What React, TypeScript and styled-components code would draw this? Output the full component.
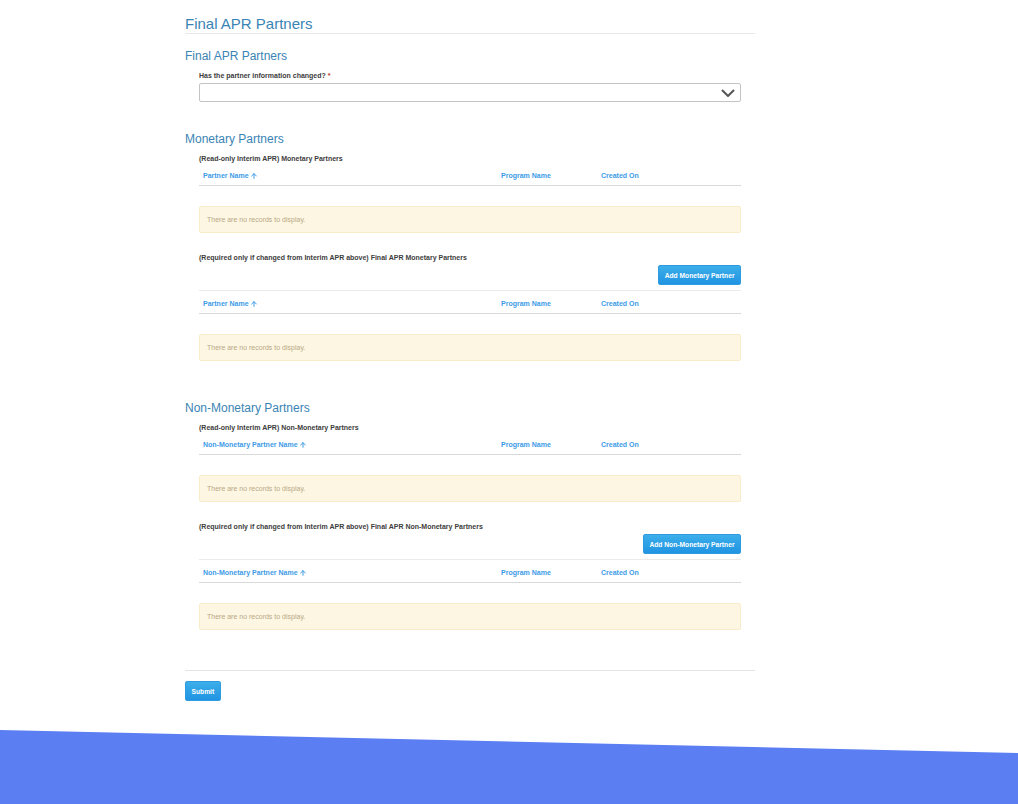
import React from "react";
import styled, { createGlobalStyle } from "styled-components";
import { ArrowUp } from "lucide-react";

const Global = createGlobalStyle`
  html, body { margin: 0; padding: 0; background: #fff; }
  body { font-family: "Liberation Sans", Arial, sans-serif; }
`;

const Page = styled.div`
  display: flex;
  flex-direction: column;
  min-height: 804px;
`;
const Main = styled.main`
  width: 570px;
  margin-left: 185px;
  height: 730px;
  padding-top: 15px;
  box-sizing: border-box;
`;
const PageTitle = styled.h1`
  margin: 0;
  height: 18px;
  line-height: 18px;
  font-size: 15px;
  font-weight: 400;
  color: #3a84b4;
  border-bottom: 1px solid #e8e8e8;
`;
const SectionTitle = styled.h2<{ $top: number }>`
  margin: ${(p) => p.$top}px 0 0;
  height: 16px;
  line-height: 16px;
  font-size: 12px;
  font-weight: 400;
  color: #3a84b4;
`;
const Indented = styled.div`
  margin: 0 14px;
`;
const FieldLabel = styled.div<{ $top: number }>`
  margin-top: ${(p) => p.$top}px;
  height: 9px;
  line-height: 9px;
  font-size: 7px;
  font-weight: 700;
  color: #3d3d3d;
  white-space: nowrap;
`;
const Req = styled.span`
  color: #c0392b;
  margin-left: 2px;
`;
const Select = styled.div`
  margin-top: 3px;
  height: 19px;
  box-sizing: border-box;
  border: 1px solid #c4c4c4;
  border-radius: 2px;
  background: #fff;
  display: flex;
  align-items: center;
  justify-content: flex-end;
  padding-right: 5px;
`;
const Chevron = styled.svg`
  display: block;
  width: 14px;
  height: 8px;
  fill: none;
  stroke: #555;
  stroke-width: 2;
`;
const ActionRow = styled.div`
  display: flex;
  justify-content: flex-end;
  margin-top: 3px;
`;
const Button = styled.button`
  display: block;
  height: 20px;
  box-sizing: border-box;
  padding: 0 5.5px;
  border: 1px solid #2e9ae0;
  border-radius: 2px;
  background: linear-gradient(#3caeea, #2094e2);
  color: #fff;
  font-family: inherit;
  font-size: 6.7px;
  font-weight: 700;
  white-space: nowrap;
`;
const HeadRow = styled.div<{ $ruled?: boolean }>`
  display: grid;
  grid-template-columns: 298px 100px 1fr;
  align-items: center;
  margin-top: ${(p) => (p.$ruled ? 5 : 3)}px;
  padding-top: ${(p) => (p.$ruled ? 3 : 0)}px;
  height: 19px;
  border-bottom: 1px solid #d9d9d9;
  border-top: ${(p) => (p.$ruled ? "1px solid #ebebeb" : "none")};
`;
const HeadCell = styled.div`
  padding-left: 4px;
  font-size: 7px;
  font-weight: 700;
  color: #3d9be8;
  display: flex;
  align-items: center;
  gap: 1px;
`;
const Empty = styled.div`
  margin-top: 20px;
  height: 27px;
  box-sizing: border-box;
  padding-left: 7px;
  display: flex;
  align-items: center;
  font-size: 7px;
  color: #b8a884;
  background: #fdf6e3;
  border: 1px solid #f9ecc9;
  border-radius: 2px;
`;
const Divider = styled.hr`
  margin: 40px 0 0;
  border: 0;
  height: 1px;
  background: #e3e3e3;
`;
const SubmitRow = styled.div`
  margin-top: 10px;
`;
const Wave = styled.div`
  height: 74px;
  background: #5b7ef2;
  clip-path: polygon(0 0, 100% 23px, 100% 100%, 0 100%);
`;

function Head({ first, ruled }: { first: string; ruled?: boolean }) {
  return (
    <HeadRow $ruled={ruled}>
      <HeadCell>
        {first}
        <ArrowUp size={8} strokeWidth={3} />
      </HeadCell>
      <HeadCell>Program Name</HeadCell>
      <HeadCell>Created On</HeadCell>
    </HeadRow>
  );
}

function PartnerBlock({ kind, first }: { kind: string; first: string }) {
  return (
    <Indented>
      <FieldLabel $top={7}>(Read-only Interim APR) {kind} Partners</FieldLabel>
      <Head first={first} />
      <Empty>There are no records to display.</Empty>
      <FieldLabel $top={20}>(Required only if changed from Interim APR above) Final APR {kind} Partners</FieldLabel>
      <ActionRow>
        <Button>Add {kind} Partner</Button>
      </ActionRow>
      <Head first={first} ruled />
      <Empty>There are no records to display.</Empty>
    </Indented>
  );
}

export default function App() {
  return (
    <Page>
      <Global />
      <Main>
        <PageTitle>Final APR Partners</PageTitle>
        <SectionTitle $top={14}>Final APR Partners</SectionTitle>
        <Indented>
          <FieldLabel $top={7}>
            Has the partner information changed?<Req>*</Req>
          </FieldLabel>
          <Select>
            <Chevron viewBox="0 0 14 8">
              <path d="M1 1 L7 7 L13 1" />
            </Chevron>
          </Select>
        </Indented>
        <SectionTitle $top={29}>Monetary Partners</SectionTitle>
        <PartnerBlock kind="Monetary" first="Partner Name" />
        <SectionTitle $top={39}>Non-Monetary Partners</SectionTitle>
        <PartnerBlock kind="Non-Monetary" first="Non-Monetary Partner Name" />
        <Divider />
        <SubmitRow>
          <Button>Submit</Button>
        </SubmitRow>
      </Main>
      <Wave />
    </Page>
  );
}
